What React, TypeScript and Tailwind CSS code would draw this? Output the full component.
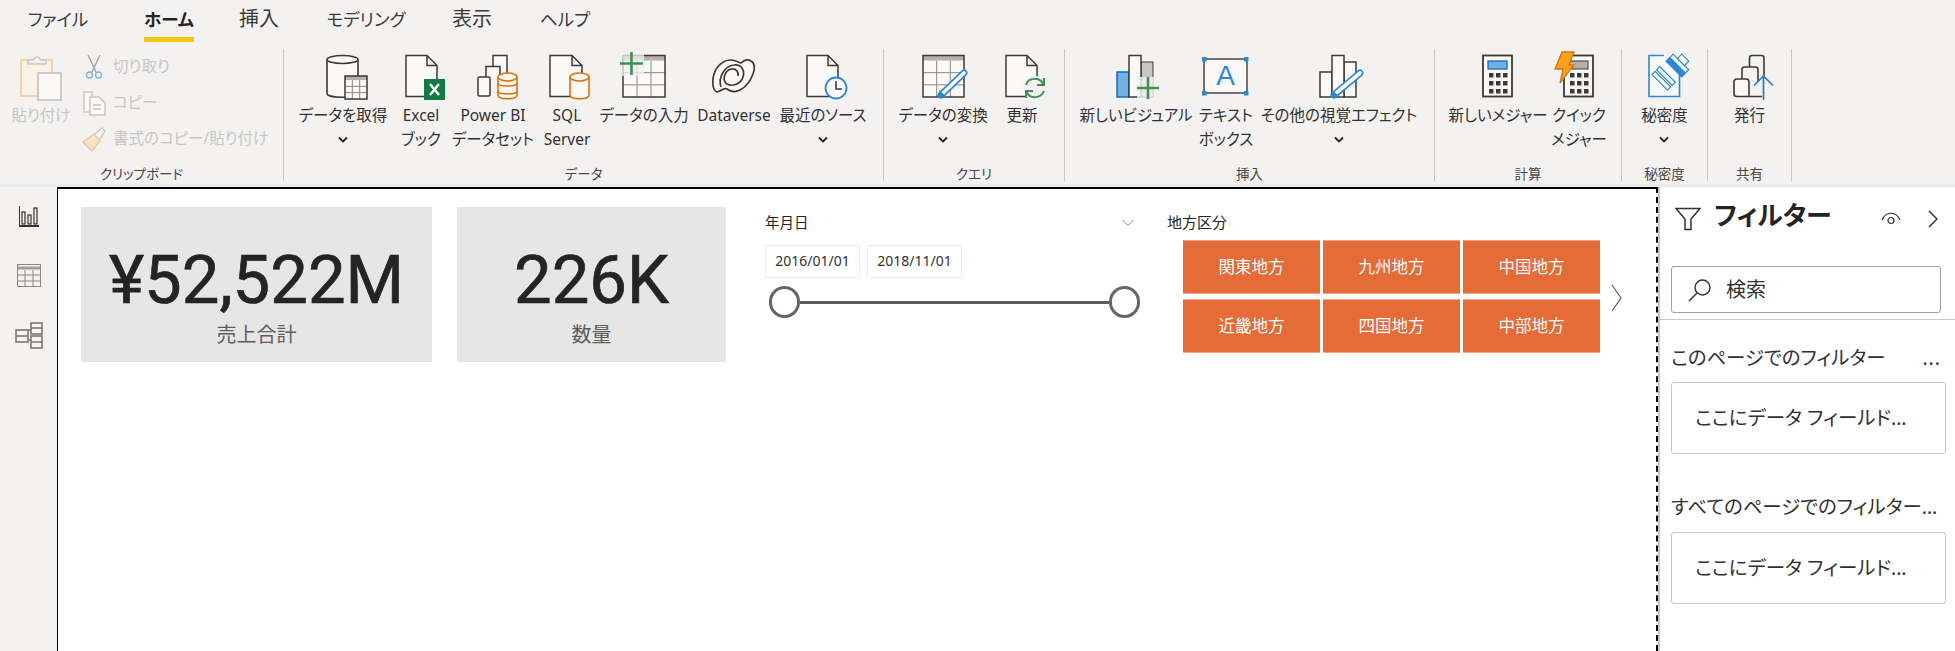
import type { ReactNode } from 'react';

const INK = '#3b3a39';
const PAPER = '#faf9f8';
const BLUE = '#2b88d8';
const GREEN = '#3f8f57';
const ORANGE = '#d9730d';

function Ic({ children }: { children: ReactNode }) {
  return (
    <svg width={48} height={48} viewBox="0 0 48 48" fill="none" className="overflow-visible shrink-0">
      {children}
    </svg>
  );
}

// page with a folded corner
function Doc({ x, w = 31, stroke = INK }: { x: number; w?: number; stroke?: string }) {
  const r = x + w;
  return (
    <path
      d={`M${x} 1.5 H${r - 10} L${r} 11.5 V42.5 H${x} Z M${r - 10} 1.5 V11.5 H${r}`}
      fill={PAPER}
      stroke={stroke}
      strokeWidth={1.5}
    />
  );
}

function Cyl({ x, y, w, h, stroke = INK }: { x: number; y: number; w: number; h: number; stroke?: string }) {
  const ry = 4;
  return (
    <g stroke={stroke} strokeWidth={1.6} fill={PAPER}>
      <path d={`M${x} ${y + ry} V${y + h - ry} C${x} ${y + h + 1} ${x + w} ${y + h + 1} ${x + w} ${y + h - ry} V${y + ry}`} />
      <ellipse cx={x + w / 2} cy={y + ry} rx={w / 2} ry={ry} />
    </g>
  );
}

function Grid({ x, y, w, h, cols, rows, head = 5 }: { x: number; y: number; w: number; h: number; cols: number; rows: number; head?: number }) {
  const lines: ReactNode[] = [];
  for (let i = 1; i < cols; i++) {
    const px = x + (w * i) / cols;
    lines.push(<line key={`c${i}`} x1={px} x2={px} y1={y + head} y2={y + h} stroke="#8a8886" strokeWidth={1} />);
  }
  for (let i = 1; i < rows; i++) {
    const py = y + head + ((h - head) * i) / rows;
    lines.push(<line key={`r${i}`} x1={x} x2={x + w} y1={py} y2={py} stroke="#8a8886" strokeWidth={1} />);
  }
  return (
    <g>
      <rect x={x} y={y} width={w} height={h} fill={PAPER} />
      <rect x={x} y={y} width={w} height={head} fill="#b3b0ad" />
      {lines}
      <rect x={x} y={y} width={w} height={h} stroke={INK} strokeWidth={1.5} />
    </g>
  );
}

function Pencil({ x1, y1, x2, y2 }: { x1: number; y1: number; x2: number; y2: number }) {
  return (
    <g>
      <line x1={x1 + 3} y1={y1 - 3} x2={x2 - 2} y2={y2 + 2} stroke={BLUE} strokeWidth={7} strokeLinecap="round" />
      <line x1={x1 + 4} y1={y1 - 4} x2={x2 - 2} y2={y2 + 2} stroke="#fff" strokeWidth={3.6} strokeLinecap="round" />
      <path d={`M${x1} ${y1} l1.5 -8 l6.5 6.5 Z`} fill={BLUE} />
    </g>
  );
}

function Bars3() {
  return (
    <g stroke={INK} strokeWidth={1.5} fill={PAPER}>
      <path d="M5 43 V18 H17 V43 Z" />
      <path d="M29 43 V8 H41 V43 Z" />
      <path d="M17 43 V1.5 H29 V43 Z" />
    </g>
  );
}

function Calc({ x }: { x: number }) {
  const keys: ReactNode[] = [];
  for (let r = 0; r < 3; r++)
    for (let c = 0; c < 3; c++)
      keys.push(<rect key={`${r}${c}`} x={x + 6 + c * 7} y={19 + r * 8} width={4.5} height={4.5} fill={INK} />);
  return (
    <g>
      <rect x={x} y={1.5} width={29} height={41} fill={PAPER} stroke={INK} strokeWidth={1.8} />
      {keys}
    </g>
  );
}

function GetData() {
  return (
    <Ic>
      <Cyl x={8} y={1.5} w={31} h={42} />
      <Grid x={26} y={22} w={22} h={23} cols={3} rows={3} head={4} />
    </Ic>
  );
}

function ExcelBook() {
  return (
    <Ic>
      <Doc x={9} />
      <rect x={27} y={25} width={21} height={21} fill="#107c41" />
      <path d="M33 30 L42 41 M42 30 L33 41" stroke="#fff" strokeWidth={2.4} />
    </Ic>
  );
}

function Dataset() {
  return (
    <Ic>
      <g stroke={INK} strokeWidth={1.5} fill={PAPER}>
        <path d="M24 12 V1.5 H38 V24" />
        <path d="M17 23 V12.5 H31 V24" />
        <rect x={9} y={23} width={12} height={19} rx={1.5} />
      </g>
      <Cyl x={29} y={19} w={19} h={26} stroke={ORANGE} />
      <g stroke={ORANGE} strokeWidth={1.6} fill="none">
        <path d="M29 29 C29 33 48 33 48 29" />
        <path d="M29 37 C29 41 48 41 48 37" />
      </g>
    </Ic>
  );
}

function SqlServer() {
  return (
    <Ic>
      <Doc x={7} w={32} />
      <Cyl x={27} y={19} w={19} h={26} stroke={ORANGE} />
    </Ic>
  );
}

function EnterData() {
  return (
    <Ic>
      <Grid x={3} y={1.5} w={42} h={41.5} cols={3} rows={3} head={5} />
      <rect x={0} y={-2} width={24} height={24} fill="#f3f2f1" opacity={0.75} />
      <path d="M0 9.5 H23 M11.5 -2 V21" stroke={GREEN} strokeWidth={2.6} />
    </Ic>
  );
}

function Dataverse() {
  return (
    <Ic>
      <g stroke={INK} strokeWidth={1.7} fill="none">
        <path
          d="M7 38 C2 36 2 26 4 20 C7 11 14 6 21 6 C25 6 28 8 31 9 C34 6 38 5 41 7 C45 9 45 15 43 20 C40 28 36 33 30 36 C26 38 21 38 17 35 C14 33 12 37 7 38 Z"
          fill={PAPER}
        />
        <path d="M11 33 C8 24 14 12 24 11 C32 10 35 17 33 23 C31 30 22 33 17 30 C12 27 14 17 21 15 C26 14 29 18 28 22" />
      </g>
    </Ic>
  );
}

function Recent() {
  return (
    <Ic>
      <Doc x={8} />
      <circle cx={37} cy={34} r={10.5} fill="#fff" stroke={BLUE} strokeWidth={1.8} />
      <path d="M37 27 V35 H43" stroke={INK} strokeWidth={1.6} />
    </Ic>
  );
}

function Transform() {
  return (
    <Ic>
      <Grid x={4} y={1.5} w={41} h={41.5} cols={3} rows={3} head={5} />
      <Pencil x1={19} y1={44} x2={47} y2={17} />
    </Ic>
  );
}

function Refresh() {
  return (
    <Ic>
      <Doc x={8} />
      <circle cx={37} cy={34} r={12} fill="#f3f2f1" />
      <g stroke={GREEN} strokeWidth={2} fill="none">
        <path d="M28 31 C30 23 42 23 45 30" />
        <path d="M46 37 C43 45 31 45 29 38" />
        <path d="M46 24 V31 H39" />
        <path d="M28 44 V37 H35" />
      </g>
    </Ic>
  );
}

function NewVisual() {
  return (
    <Ic>
      <rect x={29} y={8} width={12} height={35} fill="#c8c6c4" stroke={INK} strokeWidth={1} />
      <rect x={5} y={18} width={12} height={25} fill="#71afe5" stroke="#106ebe" strokeWidth={1.5} />
      <rect x={17} y={1.5} width={12} height={41.5} fill={PAPER} stroke={INK} strokeWidth={1.5} />
      <rect x={25} y={23} width={22} height={22} fill="#f3f2f1" opacity={0.8} />
      <path d="M25 34 H47 M36 23 V45" stroke={GREEN} strokeWidth={2.6} />
    </Ic>
  );
}

function TextBox() {
  return (
    <Ic>
      <rect x={2} y={5} width={43} height={34} fill={PAPER} stroke={INK} strokeWidth={1.4} />
      {[
        [0, 3],
        [42, 3],
        [0, 37],
        [42, 37],
      ].map(([x, y]) => (
        <rect key={`${x}${y}`} x={x} y={y} width={4.5} height={4.5} fill={BLUE} />
      ))}
      <text x={23.5} y={31} textAnchor="middle" fontSize={28} fill={BLUE} fontFamily="Liberation Sans" fontWeight={300}>
        A
      </text>
    </Ic>
  );
}

function MoreVisuals() {
  return (
    <Ic>
      <Bars3 />
      <Pencil x1={16} y1={44} x2={47} y2={17} />
    </Ic>
  );
}

function NewMeasure() {
  return (
    <Ic>
      <Calc x={9} />
      <rect x={14} y={7} width={19} height={8} fill="#71afe5" stroke="#106ebe" strokeWidth={1.3} />
    </Ic>
  );
}

function QuickMeasure() {
  return (
    <Ic>
      <Calc x={9} />
      <rect x={14} y={7} width={19} height={8} fill="#b3b0ad" stroke={INK} strokeWidth={1} />
      <path d="M7 -2 H19 L14 11 H19 L5 29 L8 15 H0 Z" fill="#f2a51a" stroke={ORANGE} strokeWidth={1.3} />
    </Ic>
  );
}

function Sensitivity() {
  return (
    <Ic>
      <path d="M8 1.5 H23 L39 18 V42.5 H8 Z" fill={PAPER} />
      <path d="M23 1.5 H8 V42.5 H38.5 V19" stroke={BLUE} strokeWidth={1.6} />
      <g transform="rotate(45 35 13)">
        <rect x={24} y={6} width={22} height={10} fill="#fff" stroke={BLUE} strokeWidth={1.2} />
        <rect x={24} y={10} width={22} height={6} fill={BLUE} />
        <rect x={30} y={0} width={10} height={6} fill="#fff" stroke={BLUE} strokeWidth={1.2} />
      </g>
      <g transform="rotate(45 23 24)" stroke={BLUE} strokeWidth={1.2} fill="none">
        <rect x={12} y={19} width={22} height={4.5} />
        <rect x={12} y={25.5} width={22} height={4.5} />
      </g>
    </Ic>
  );
}

function Publish() {
  return (
    <Ic>
      <g stroke={INK} strokeWidth={1.6}>
        <path d="M23.5 13 V4 Q23.5 1.5 26 1.5 H35.5 Q38 1.5 38 4 V22" />
        <path d="M16 25 V15.5 Q16 13 18.5 13 H29.5 Q32 13 32 15.5 V28" />
        <path d="M8 40 V28 Q8 25 11 25 H20 Q23 25 23 28 V42.5 H11 Q8 42.5 8 40 Z M23 42.5 H36" fill={PAPER} />
      </g>
      <path d="M37.5 46 V22 M28 31.5 L37.5 22 L47 31.5" stroke="#2b7cb8" strokeWidth={1.7} />
    </Ic>
  );
}

function Chevron() {
  return (
    <svg width={12} height={8} viewBox="0 0 12 8" fill="none" className="mt-[9px]">
      <path d="M2 1.5 L6 5.5 L10 1.5" stroke="#252423" strokeWidth={1.8} />
    </svg>
  );
}

function RibbonItem({ w, icon, lines, more }: { w: string; icon: ReactNode; lines: string[]; more?: boolean }) {
  return (
    <div className={`${w} flex flex-col items-center pt-[5px]`}>
      {icon}
      <div className="mt-[1px] flex flex-col items-center text-[15.5px] leading-[24px] text-[#323130] whitespace-nowrap">
        {lines.map((l) => (
          <span key={l}>{l}</span>
        ))}
        {more && <Chevron />}
      </div>
    </div>
  );
}

function RibbonGroup({ w, pl, label, children }: { w: string; pl: string; label: string; children: ReactNode }) {
  return (
    <div className={`${w} h-[132px] shrink-0 flex flex-col border-r border-[#c8c6c4]`}>
      <div className={`${pl} flex flex-1`}>{children}</div>
      <div className="text-center text-[13.5px] leading-[14px] text-[#484644]">{label}</div>
    </div>
  );
}

function SmallAction({ icon, label }: { icon: ReactNode; label: string }) {
  return (
    <div className="h-[36px] flex items-center gap-[7px] text-[15.5px] text-[#c8c6c4] whitespace-nowrap">
      <svg width={24} height={26} viewBox="0 0 24 26" fill="none" className="shrink-0">
        {icon}
      </svg>
      <span>{label}</span>
    </div>
  );
}

function PasteIcon() {
  return (
    <svg width={48} height={48} viewBox="0 0 48 48" fill="none" className="overflow-visible">
      <rect x={4} y={6} width={31} height={36} fill="#fbf1e4" stroke="#f0d3ae" strokeWidth={2} />
      <path d="M11 10 V6 H16 Q20 0 24 6 H29 V10 Z" fill="#f3f2f1" stroke="#c8c6c4" strokeWidth={1.5} />
      <rect x={21} y={19} width={23} height={27} fill="#faf9f8" stroke="#c8c6c4" strokeWidth={1.8} />
    </svg>
  );
}

const tabs = [
  { label: 'ファイル', w: 'w-[88px]', size: 'text-[17.5px]' },
  { label: 'ホーム', w: 'w-[134px]', size: 'text-[17.5px]', active: true },
  { label: '挿入', w: 'w-[46px]', size: 'text-[20px]' },
  { label: 'モデリング', w: 'w-[168px]', size: 'text-[17.5px]' },
  { label: '表示', w: 'w-[44px]', size: 'text-[20px]' },
  { label: 'ヘルプ', w: 'w-[142px]', size: 'text-[17.5px]' },
];

function Ribbon() {
  return (
    <div className="h-[187px] shrink-0 bg-[#f3f2f1] border-b-[3px] border-[#ebeaea]">
      <div className="h-[49px] pl-[14px] flex">
        {tabs.map((t) => (
          <div key={t.label} className={`${t.w} flex justify-center`}>
            <div className={`h-[42px] pt-[6px] ${t.size} leading-[26px] whitespace-nowrap ${t.active ? 'font-bold text-[#252423] border-b-[5px] border-[#f2c811]' : 'text-[#3b3a39]'}`}>
              {t.label}
            </div>
          </div>
        ))}
      </div>
      <div className="flex">
        <RibbonGroup w="w-[284px]" pl="pl-0" label="クリップボード">
          <div className="w-[82px] flex flex-col items-center pt-[5px] text-[15.5px] text-[#c8c6c4]">
            <PasteIcon />
            <span className="mt-[1px] leading-[24px] whitespace-nowrap">貼り付け</span>
          </div>
          <div className="pt-0 flex flex-col">
            <SmallAction
              label="切り取り"
              icon={
                <g stroke="#a19f9d" strokeWidth={1.3}>
                  <path d="M6 1 L14 18 M18 1 L10 18" />
                  <circle cx={7.5} cy={21} r={3} stroke="#7fb4de" />
                  <circle cx={16.5} cy={21} r={3} stroke="#7fb4de" />
                </g>
              }
            />
            <SmallAction
              label="コピー"
              icon={
                <g stroke="#c8c6c4" strokeWidth={1.5} fill="#faf9f8">
                  <path d="M2 2 H10 V22 H2 Z" />
                  <path d="M8 7 H17 L23 13 V25 H8 Z M11 15 H19 M11 19 H19" />
                </g>
              }
            />
            <SmallAction
              label="書式のコピー/貼り付け"
              icon={
                <g strokeWidth={1.4}>
                  <path d="M1 16 L12 8 L18 15 L10 25 Z" fill="#f7e3c8" stroke="#e8c79d" />
                  <path d="M13 8 L20 2 L23 5 L18 13" fill="#faf9f8" stroke="#c8c6c4" />
                </g>
              }
            />
          </div>
        </RibbonGroup>
        <RibbonGroup w="w-[600px]" pl="pl-[16px]" label="データ">
          <RibbonItem w="w-[86px]" icon={<GetData />} lines={['データを取得']} more />
          <RibbonItem w="w-[70px]" icon={<ExcelBook />} lines={['Excel', 'ブック']} />
          <RibbonItem w="w-[74px]" icon={<Dataset />} lines={['Power BI', 'データセット']} />
          <RibbonItem w="w-[74px]" icon={<SqlServer />} lines={['SQL', 'Server']} />
          <RibbonItem w="w-[80px]" icon={<EnterData />} lines={['データの入力']} />
          <RibbonItem w="w-[100px]" icon={<Dataverse />} lines={['Dataverse']} />
          <RibbonItem w="w-[78px]" icon={<Recent />} lines={['最近のソース']} more />
        </RibbonGroup>
        <RibbonGroup w="w-[181px]" pl="pl-[15px]" label="クエリ">
          <RibbonItem w="w-[88px]" icon={<Transform />} lines={['データの変換']} more />
          <RibbonItem w="w-[70px]" icon={<Refresh />} lines={['更新']} />
        </RibbonGroup>
        <RibbonGroup w="w-[370px]" pl="pl-[15px]" label="挿入">
          <RibbonItem w="w-[112px]" icon={<NewVisual />} lines={['新しいビジュアル']} />
          <RibbonItem w="w-[68px]" icon={<TextBox />} lines={['テキスト', 'ボックス']} />
          <RibbonItem w="w-[158px]" icon={<MoreVisuals />} lines={['その他の視覚エフェクト']} more />
        </RibbonGroup>
        <RibbonGroup w="w-[187px]" pl="pl-[15px]" label="計算">
          <RibbonItem w="w-[96px]" icon={<NewMeasure />} lines={['新しいメジャー']} />
          <RibbonItem w="w-[66px]" icon={<QuickMeasure />} lines={['クイック', 'メジャー']} />
        </RibbonGroup>
        <RibbonGroup w="w-[86px]" pl="pl-0" label="秘密度">
          <RibbonItem w="w-[85px]" icon={<Sensitivity />} lines={['秘密度']} more />
        </RibbonGroup>
        <RibbonGroup w="w-[84px]" pl="pl-0" label="共有">
          <RibbonItem w="w-[83px]" icon={<Publish />} lines={['発行']} />
        </RibbonGroup>
      </div>
    </div>
  );
}

function SideNav() {
  return (
    <div className="w-[57px] shrink-0 bg-[#f3f2f1] flex flex-col items-center pt-[19px] pl-[1px]">
      <svg width={20} height={21} viewBox="0 0 20 21" fill="none">
        <path d="M0.5 0 V19.5 H20 M0 20.5 H20" stroke="#323130" strokeWidth={1} />
        <rect x={3} y={6} width={3} height={12} stroke="#323130" strokeWidth={1.2} />
        <rect x={9} y={9} width={3} height={9} stroke="#323130" strokeWidth={1.2} />
        <rect x={15} y={2} width={3} height={16} stroke="#323130" strokeWidth={1.2} />
      </svg>
      <svg width={24} height={23} viewBox="0 0 24 23" fill="none" className="mt-[37px]">
        <rect x={0.5} y={0.5} width={23} height={22} stroke="#8a8886" />
        <path d="M1 4 H23" stroke="#a19f9d" strokeWidth={3} />
        <path d="M8 6 V22 M16 6 V22 M1 11 H23 M1 17 H23" stroke="#8a8886" />
      </svg>
      <svg width={28} height={27} viewBox="0 0 28 27" fill="none" stroke="#7a7876" strokeWidth={1.6} className="mt-[35px]">
        <rect x={1} y={8} width={12} height={12} />
        <path d="M1 14 H13" />
        <rect x={16} y={1} width={11} height={11} />
        <path d="M16 6 H27" />
        <rect x={16} y={14} width={11} height={12} />
        <path d="M16 20 H27 M13 8 H16 M13 18 H16" />
      </svg>
    </div>
  );
}

function Kpi({ w, value, label }: { w: string; value: string; label: string }) {
  return (
    <div className={`${w} h-[155px] shrink-0 bg-[#e6e6e6] flex flex-col items-center pt-[33px]`}>
      <div className="font-['Roboto',sans-serif] font-normal [-webkit-text-stroke:0.7px_#252423] text-[67px] leading-[80px] text-[#252423]">{value}</div>
      <div className="mt-[2px] text-[20px] leading-[26px] text-[#605e5c]">{label}</div>
    </div>
  );
}

const regions = ['関東地方', '九州地方', '中国地方', '近畿地方', '四国地方', '中部地方'];

function Canvas() {
  return (
    <div className="flex-1 bg-white border-l border-t-2 border-r-2 border-black [border-right-style:dashed] pt-[18px] pl-[23px] flex items-start">
      <Kpi w="w-[351px]" value="¥52,522M" label="売上合計" />
      <div className="w-[25px] shrink-0" />
      <Kpi w="w-[269px]" value="226K" label="数量" />
      <div className="w-[39px] shrink-0" />
      <div className="w-[375px] shrink-0">
        <div className="h-[33px] pr-[5px] pb-[2px] flex items-center justify-between text-[14.5px] text-[#252423]">
          <span>年月日</span>
          <svg width={14} height={8} viewBox="0 0 14 8" fill="none">
            <path d="M1.5 1 L7 6.5 L12.5 1" stroke="#8a8886" />
          </svg>
        </div>
        <div className="mt-[5px] flex gap-[7px] text-[14px] text-[#323130]">
          {['2016/01/01', '2018/11/01'].map((d) => (
            <div key={d} className="w-[95px] h-[33px] pb-[2px] border border-[#edebe9] flex items-center justify-center">
              {d}
            </div>
          ))}
        </div>
        <div className="mt-[8px] ml-[4px] flex items-center">
          <div className="w-[31px] h-[32px] rounded-full border-[3px] border-[#666] bg-white shrink-0" />
          <div className="flex-1 h-[3px] bg-[#5c5c5c]" />
          <div className="w-[31px] h-[32px] rounded-full border-[3px] border-[#666] bg-white shrink-0" />
        </div>
      </div>
      <div className="w-[27px] shrink-0" />
      <div className="shrink-0">
        <div className="h-[33px] pb-[2px] flex items-center text-[15px] text-[#252423]">地方区分</div>
        <div className="flex items-center">
          <div className="ml-[16px] grid grid-cols-[137px_137px_137px] auto-rows-[54px] gap-x-[3px] gap-y-[5px]">
            {regions.map((r) => (
              <div key={r} className="bg-[#e56b37] border-y border-[#f0a686] flex items-center justify-center text-[16.5px] text-white">
                {r}
              </div>
            ))}
          </div>
          <svg width={12} height={28} viewBox="0 0 12 28" fill="none" className="ml-[11px] mt-[3px]">
            <path d="M1 1 L10 14 L1 27" stroke="#605e5c" strokeWidth={1.2} />
          </svg>
        </div>
      </div>
    </div>
  );
}

function DropCard() {
  return (
    <div className="ml-[11px] mr-[9px] h-[72px] rounded-[3px] border border-[#c8c6c4] flex items-center pl-[23px] text-[19.5px] text-[#323130] whitespace-nowrap">
      ここにデータ フィールド...
    </div>
  );
}

function FilterPane() {
  return (
    <div className="w-[297px] shrink-0 bg-white flex flex-col border-l-2 border-[#c8c6c4]">
      <div className="h-[60px] pl-[15px] pr-[17px] flex items-center">
        <svg width={26} height={24} viewBox="0 0 26 24" fill="none" className="mt-[3px]">
          <path d="M1 1.5 H25 L16 12 V22.5 H10 V12 Z" stroke="#323130" strokeWidth={1.5} />
        </svg>
        <span className="ml-[13px] mb-[5px] text-[26px] font-bold leading-[30px] text-[#252423]">フィルター</span>
        <svg width={20} height={14} viewBox="0 0 20 14" fill="none" className="ml-auto mr-[27px] mt-[3px]">
          <path d="M1 8 C5 -1 15 -1 19 8" stroke="#323130" strokeWidth={1.2} />
          <circle cx={10} cy={8.5} r={3} stroke="#323130" strokeWidth={1.2} />
        </svg>
        <svg width={10} height={18} viewBox="0 0 10 18" fill="none" className="mt-[3px]">
          <path d="M1 1 L9 9 L1 17" stroke="#323130" strokeWidth={1.5} />
        </svg>
      </div>
      <div className="ml-[11px] mr-[14px] mt-[19px] h-[47px] rounded-[3px] border border-[#a19f9d] flex items-center pl-[16px] text-[20px] text-[#323130]">
        <svg width={24} height={24} viewBox="0 0 24 24" fill="none">
          <circle cx={14.5} cy={9.5} r={7.5} stroke="#323130" strokeWidth={1.4} />
          <path d="M9 15 L1 23" stroke="#323130" strokeWidth={1.4} />
        </svg>
        <span className="ml-[14px]">検索</span>
      </div>
      <div className="mt-[6px] h-px bg-[#c8c6c4]" />
      <div className="mt-[23px] ml-[11px] mr-[14px] h-[30px] flex items-center justify-between text-[19.4px] text-[#323130] whitespace-nowrap">
        <span>このページでのフィルター</span>
        <span className="tracking-[1px]">...</span>
      </div>
      <div className="mt-[9px]">
        <DropCard />
      </div>
      <div className="mt-[38px] ml-[11px] mr-[9px] h-[30px] flex items-center text-[19.4px] text-[#323130] whitespace-nowrap overflow-hidden">
        すべてのページでのフィルター...
      </div>
      <div className="mt-[10px]">
        <DropCard />
      </div>
    </div>
  );
}

export default function App() {
  return (
    <div className="w-[1955px] h-[651px] overflow-hidden flex flex-col bg-white font-['Noto_Sans','Noto_Sans_CJK_JP',sans-serif] [font-feature-settings:'palt']">
      <Ribbon />
      <div className="flex-1 flex min-h-0">
        <SideNav />
        <Canvas />
        <FilterPane />
      </div>
    </div>
  );
}
